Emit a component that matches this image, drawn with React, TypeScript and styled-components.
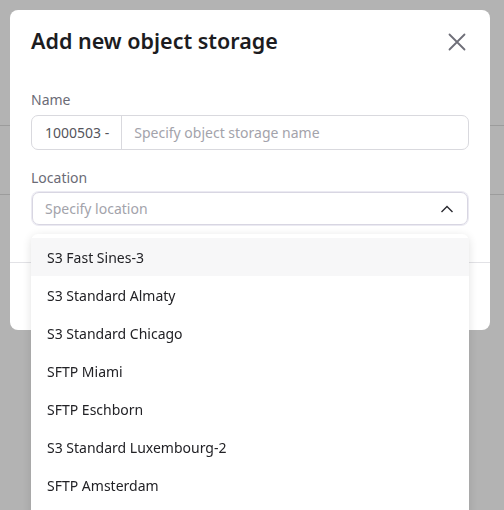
import styled, { createGlobalStyle } from 'styled-components';

const GlobalStyle = createGlobalStyle`
    html, body {
        margin: 0;
        height: 100%;
        overflow: hidden;
    }

    body {
        font-family: "Noto Sans", "Open Sans", sans-serif;
        background: #b3b3b3;
    }
`;

const Backdrop = styled.div`
    position: fixed;
    inset: 0;
    padding-top: 125px;
    background: #b3b3b3;
`;

const BackRow = styled.div`
    height: 68px;
    border-top: 1px solid #9c9c9c;
`;

const Modal = styled.div`
    position: absolute;
    top: 10px;
    left: 10px;
    width: 480px;
    display: flex;
    flex-direction: column;

    background: #fff;
    border-radius: 8px;
`;

const Header = styled.div`
    display: flex;
    align-items: center;
    justify-content: space-between;
    padding: 16px 21px 0 21px;

    h2 {
        margin: 0;
        font-size: 21.5px;
        line-height: 30px;
        font-weight: 600;
        color: #1c1c1f;
    }
`;

const CloseButton = styled.button`
    display: flex;
    margin: 1px 3px 0 0;
    padding: 0;
    border: none;
    background: none;
    cursor: pointer;
`;

const Body = styled.div`
    display: flex;
    flex-direction: column;
    padding: 34px 21px 37px 21px;
`;

const Label = styled.label<{ $gap: number }>`
    margin-bottom: ${p => p.$gap}px;
    font-size: 14px;
    line-height: 19px;
    color: #6b6b76;
`;

const Field = styled.div<{ $top?: number }>`
    display: flex;
    flex-direction: column;
    margin-top: ${p => p.$top ?? 0}px;
    position: relative;
`;

const InputGroup = styled.div`
    display: flex;
    height: 35px;
    box-sizing: border-box;
    border: 1px solid #d9d9de;
    border-radius: 7px;
    font-size: 14px;
`;

const Prefix = styled.span`
    display: flex;
    align-items: center;
    padding: 0 12px 0 13px;
    border-right: 1px solid #d9d9de;
    color: #55555c;
`;

const Placeholder = styled.span`
    display: flex;
    align-items: center;
    flex: 1;
    padding-left: 12px;
    color: #a3a3ab;
`;

const Select = styled.div`
    display: flex;
    align-items: center;
    justify-content: space-between;
    height: 33px;
    box-sizing: border-box;
    margin: 0 1px;
    padding: 0 13px 0 12px;
    border: 1px solid #d8d6e2;
    border-radius: 7px;
    box-shadow: 0 0 0 1px #ebeaf2;
    font-size: 14px;
    color: #a3a3ab;
`;

const Menu = styled.ul`
    position: absolute;
    top: calc(100% + 9px);
    left: 0;
    right: 0;
    margin: 0;
    padding: 4px 0 40px 0;
    list-style: none;

    background: #fff;
    border-radius: 7px;
    box-shadow: 0 2px 10px rgba(0, 0, 0, 0.12);
`;

const Option = styled.li<{ $active?: boolean }>`
    display: flex;
    align-items: center;
    height: 38px;
    padding-left: 16px;

    font-size: 14px;
    color: #222226;
    background: ${p => (p.$active ? '#f7f7f8' : 'transparent')};
`;

const Footer = styled.div`
    display: flex;
    justify-content: flex-end;
    align-items: center;
    gap: 10px;
    height: 67px;
    padding: 0 21px;
    border-top: 1px solid #e2e2e6;
`;

const FooterButton = styled.button`
    height: 34px;
    padding: 0 16px;
    margin-right: 24px;
    border: 1px solid #d9d9de;
    border-radius: 7px;
    background: #fff;
    font: inherit;
    font-size: 14px;
`;

const locations = [
    'S3 Fast Sines-3',
    'S3 Standard Almaty',
    'S3 Standard Chicago',
    'SFTP Miami',
    'SFTP Eschborn',
    'S3 Standard Luxembourg-2',
    'SFTP Amsterdam',
];

export const App = () => (
    <>
        <GlobalStyle />
        <Backdrop>
            <BackRow />
            <BackRow />
        </Backdrop>
        <Modal>
            <Header>
                <h2>Add new object storage</h2>
                <CloseButton aria-label="Close">
                    <svg width="18" height="18" viewBox="0 0 18 18">
                        <path
                            d="M1.5 1.5 16.5 16.5M16.5 1.5 1.5 16.5"
                            stroke="#6e6e78"
                            strokeWidth="1.8"
                            strokeLinecap="round"
                        />
                    </svg>
                </CloseButton>
            </Header>
            <Body>
                <Field>
                    <Label $gap={6}>Name</Label>
                    <InputGroup>
                        <Prefix>1000503 -</Prefix>
                        <Placeholder>Specify object storage name</Placeholder>
                    </InputGroup>
                </Field>
                <Field $top={18}>
                    <Label $gap={5}>Location</Label>
                    <Select>
                        <span>Specify location</span>
                        <svg width="14" height="8" viewBox="0 0 14 8">
                            <path
                                d="M1.5 7 7 1.5 12.5 7"
                                fill="none"
                                stroke="#2a2a30"
                                strokeWidth="1.4"
                            />
                        </svg>
                    </Select>
                    <Menu>
                        {locations.map((name, i) => (
                            <Option key={name} $active={i === 0}>
                                {name}
                            </Option>
                        ))}
                    </Menu>
                </Field>
            </Body>
            <Footer>
                <FooterButton>Cancel</FooterButton>
            </Footer>
        </Modal>
    </>
);

export default App;
